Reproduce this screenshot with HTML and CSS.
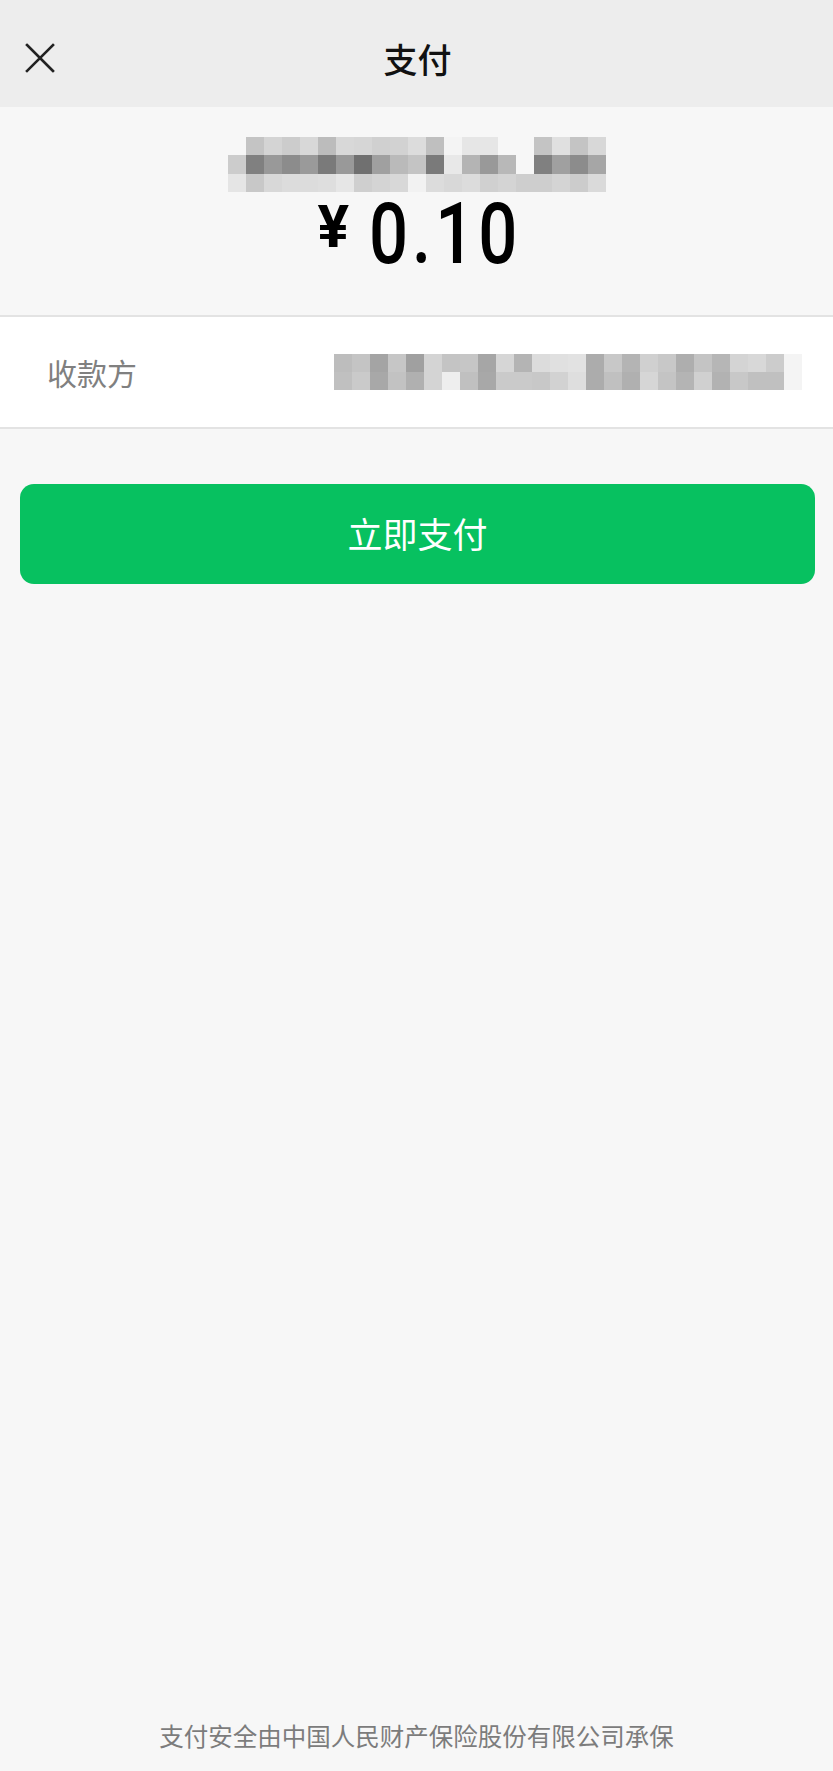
FILE: index.html
```html
<!DOCTYPE html>
<html lang="zh-CN">
<head>
<meta charset="utf-8">
<title>支付</title>
<link rel="stylesheet" href="styles.css">
</head>
<body>
<div class="page">
  <header class="nav">
    <div class="nav-left">
      <svg class="close-icon" viewBox="0 0 30 30" width="30" height="30" aria-hidden="true">
        <path d="M2 2 L28 28 M28 2 L2 28" stroke="#222" stroke-width="2.6" stroke-linecap="square" fill="none"/>
      </svg>
    </div>
    <div class="nav-title">支付</div>
    <div class="nav-right"></div>
  </header>

  <section class="summary">
    <div class="mosaic mosaic-name" data-set="name"></div>
    <div class="amount">
      <span class="currency">¥</span>
      <span class="value">0.10</span>
    </div>
  </section>

  <section class="payee-row">
    <span class="payee-label">收款方</span>
    <div class="mosaic mosaic-payee" data-set="payee"></div>
  </section>

  <div class="actions">
    <button class="pay-btn" type="button">立即支付</button>
  </div>

  <footer class="footer">支付安全由中国人民财产保险股份有限公司承保</footer>
</div>
<script src="script.js"></script>
</body>
</html>
```

FILE: styles.css
```css
* {
  box-sizing: border-box;
}

html, body {
  margin: 0;
  padding: 0;
  background: #f7f7f7;
}

body {
  font-family: "Noto Sans CJK SC", "Noto Sans", Roboto, sans-serif;
  color: #111;
}

.page {
  min-height: 1771px;
  display: flex;
  flex-direction: column;
}

.nav {
  height: 107px;
  background: #ededed;
  display: grid;
  grid-template-columns: 1fr auto 1fr;
  align-items: center;
}

.nav-left {
  display: flex;
  align-items: center;
  padding-left: 25px;
  padding-top: 8px;
}

.close-icon {
  display: block;
}

.nav-title {
  font-size: 34px;
  font-weight: 500;
  line-height: 40px;
  color: #111;
  padding-top: 10px;
  padding-left: 2px;
}

.summary {
  height: 210px;
  padding-top: 30px;
  display: flex;
  flex-direction: column;
  align-items: center;
  border-bottom: 2px solid #e3e3e3;
}

.mosaic {
  display: grid;
  grid-auto-rows: 18px;
}

.mosaic-name {
  grid-template-columns: repeat(21, 18px);
  grid-auto-rows: 18.4px;
}

.mosaic-payee {
  grid-template-columns: repeat(26, 18px);
}

.cell {
  width: 18px;
  height: 100%;
}

.amount {
  display: flex;
  align-items: flex-start;
  margin-top: -1px;
  margin-left: 10px;
  font-family: Roboto, "Liberation Sans", sans-serif;
  color: #000;
}

.currency {
  font-size: 59px;
  line-height: 59px;
  font-weight: 700;
  margin-top: 6px;
  margin-right: 20px;
}

.value {
  font-size: 86px;
  line-height: 86px;
  font-weight: 500;
  letter-spacing: 5px;
  display: inline-block;
  transform: scaleX(0.8);
  transform-origin: left center;
  margin-right: -34px;
}

.payee-row {
  height: 112px;
  background: #fff;
  border-bottom: 2px solid #e3e3e3;
  display: flex;
  align-items: center;
  justify-content: space-between;
  padding-left: 47px;
  padding-right: 31px;
}

.payee-label {
  font-size: 30px;
  line-height: 36px;
  color: #808080;
}

.actions {
  padding: 55px 18px 0 20px;
}

.pay-btn {
  width: 100%;
  height: 100px;
  border: none;
  border-radius: 14px;
  background: #07c160;
  color: #fff;
  font-family: "Noto Sans CJK SC", "Noto Sans", sans-serif;
  font-size: 35px;
  font-weight: 400;
  padding: 0 0 4px 0;
  letter-spacing: 0;
}

.footer {
  margin-top: auto;
  text-align: center;
  font-size: 24.5px;
  line-height: 34px;
  color: #7c7c7c;
  padding-bottom: 18px;
}
```

FILE: script.js
```js
(function () {
  var sets = {
    name: [
      [null,'c4','d4','cc','d8','bc','d8','d6','d0','d2','dc','bf','f4','e6','e6',null,null,'c4','e0','c4','d8'],
      ['cc','80','99','8c','9a','7a','99','70','a0','ba','c4','7a','e8','b4','99','b8',null,'80','a0','8c','a6'],
      ['e5','c8','d8','dc','dc','de','e6','cf','d4','d8','f2','dc','d8','dc','d0','d4','ce','ce','d4','cc','da']
    ],
    payee: [
      ['bd','c4','a4','c6','a0','d4','c4','c6','a6','d6','b4','dc','e0','e2','ac','c8','b4','d0','c8','ae','c4','b6','d4','d8','cc','f4'],
      ['c0','ca','a8','c2','b0','d4','ee','c0','a8','ca','ca','c8','d2','de','ac','c0','b0','d6','c4','b4','d0','b2','c8','c0','c0','f4']
    ]
  };
  var boxes = document.querySelectorAll('.mosaic');
  for (var b = 0; b < boxes.length; b++) {
    var rows = sets[boxes[b].getAttribute('data-set')];
    for (var r = 0; r < rows.length; r++) {
      for (var c = 0; c < rows[r].length; c++) {
        var cell = document.createElement('div');
        cell.className = 'cell';
        var v = rows[r][c];
        if (v) {
          cell.style.background = '#' + v + v + v;
        }
        boxes[b].appendChild(cell);
      }
    }
  }
})();
```
